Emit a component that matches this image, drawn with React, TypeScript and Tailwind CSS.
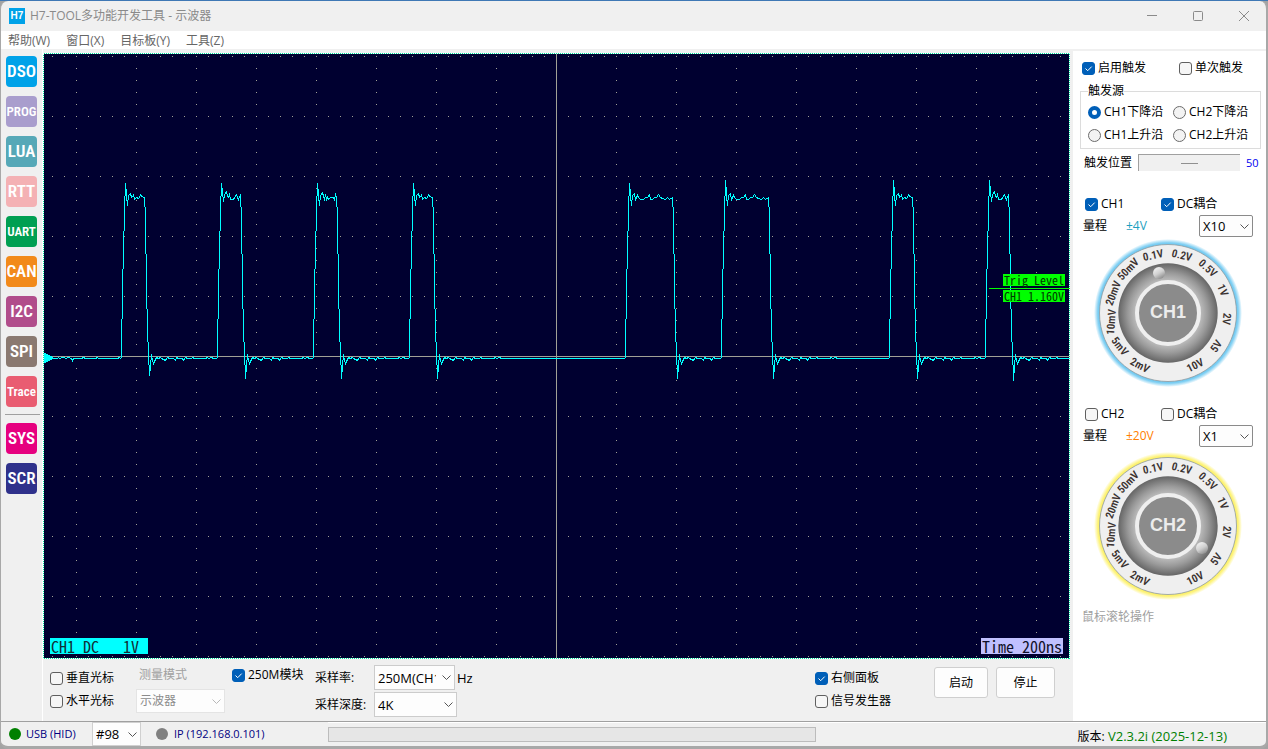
import React, { useState } from "react";

type Point = [number, number];

const TOOLS: { label: string; color: string; size: string }[] = [
  { label: "DSO", color: "bg-[#00a2e8]", size: "text-[17px]" },
  { label: "PROG", color: "bg-[#a99dcd]", size: "text-[13px]" },
  { label: "LUA", color: "bg-[#56a8b7]", size: "text-[17px]" },
  { label: "RTT", color: "bg-[#f4b1b4]", size: "text-[17px]" },
  { label: "UART", color: "bg-[#009f52]", size: "text-[13px]" },
  { label: "CAN", color: "bg-[#f28a1a]", size: "text-[17px]" },
  { label: "I2C", color: "bg-[#b14d8b]", size: "text-[17px]" },
  { label: "SPI", color: "bg-[#8a7970]", size: "text-[17px]" },
  { label: "Trace", color: "bg-[#e95c71]", size: "text-[13px]" },
];

const SYSTEM_TOOLS: { label: string; color: string; size: string }[] = [
  { label: "SYS", color: "bg-[#e6007f]", size: "text-[17px]" },
  { label: "SCR", color: "bg-[#2f318b]", size: "text-[17px]" },
];

const MENUS = ["帮助(W)", "窗口(X)", "目标板(Y)", "工具(Z)"];

/* ---------- waveform data ---------- */

const SHORT_TOPS: Point[][] = [
  [[1.5, 200], [2, 205], [3, 195], [5, 193], [6, 197], [7.5, 196], [8, 194], [9, 199], [11, 197], [13, 198], [14, 197], [15, 194], [16.5, 196], [19, 197]],
  [[1.5, 196], [2, 201], [3, 194], [5, 191], [6, 196], [7, 197], [8, 194], [9, 199], [12, 199], [13, 197], [15, 194], [16, 197], [17, 199], [19, 194]],
  [[1.5, 200], [2, 205], [3, 195], [5, 192], [6, 196], [7, 199], [8, 194], [9, 199], [10, 197], [11, 199], [13, 197], [16, 197], [17, 199], [18, 194], [19, 197]],
];

const LONG_TOP: Point[] = [
  [1.5, 200], [2, 205], [3, 195], [5, 193], [6, 199], [8, 195], [9, 197], [11, 199], [14, 199], [16, 197], [18, 197],
  [20, 194], [21, 199], [23, 199], [25, 197], [27, 197], [29, 194], [31, 197], [33, 198], [36, 199], [38, 197], [40, 199], [43, 197],
];

const NOISE: Point[] = [
  [31, 357], [33, 358], [35, 357], [36, 358], [40, 360], [41, 358], [42, 357], [44, 358], [48, 358], [50, 360], [51, 357], [53, 358],
  [57, 358], [58, 360], [60, 357], [62, 358], [66, 358], [67, 357], [69, 358], [80, 358], [82, 357], [83, 358], [86, 357], [88, 358],
];

const PULSES: { x: number; peak: number; wide?: boolean; low: number }[] = [
  { x: 125, peak: 183, low: 375 },
  { x: 221, peak: 183, low: 378 },
  { x: 317, peak: 183, low: 378 },
  { x: 413, peak: 183, low: 378 },
  { x: 629, peak: 183, low: 378, wide: true },
  { x: 725, peak: 180, low: 378, wide: true },
  { x: 893, peak: 180, low: 378 },
  { x: 989, peak: 180, low: 380 },
];

function buildTrace(): string {
  const pts: Point[] = [
    [53, 358], [57, 358], [58, 357], [59, 358], [62, 357], [64, 357], [65, 358], [68, 357], [71, 358], [72, 360], [73, 358],
    [81, 358], [83, 357], [85, 358], [95, 358], [97, 357], [98, 358], [117, 358], [119, 357], [120, 358],
  ];
  PULSES.forEach((p, i) => {
    const w = p.wide ? 24 : 0;
    const add = (dx: number, y: number) => pts.push([p.x + dx, y]);
    add(-5, 358);
    add(-3.6, 357);
    add(-3.5, 319);
    add(-2.5, 269);
    add(-1.5, 231);
    add(-0.6, 199);
    add(0, p.peak);
    (p.wide ? LONG_TOP : SHORT_TOPS[i % SHORT_TOPS.length]).forEach(([dx, y]) => add(dx, y));
    add(w + 19.4, 198);
    add(w + 19.5, 206);
    add(w + 20.5, 253);
    add(w + 21.5, 308);
    add(w + 22.5, 341);
    add(w + 23.5, 364);
    add(w + 24, p.low);
    add(w + 25, 366);
    add(w + 26, 354);
    add(w + 27, 360);
    add(w + 28, 363);
    add(w + 29, 361);
    const next = PULSES[i + 1] ? PULSES[i + 1].x - 6 : 1068;
    NOISE.forEach(([dx, y]) => {
      if (p.x + w + dx < next) add(w + dx, y);
    });
  });
  pts.push([1069, 358]);
  return pts.map(([x, y]) => `${x + 0.5},${y + 0.5}`).join(" ");
}

const TRACE = buildTrace();

const range = (from: number, to: number, step: number) => {
  const out: number[] = [];
  for (let v = from; v <= to; v += step) out.push(v);
  return out;
};

const ROWS = range(56, 656, 60).filter((y) => y !== 356);
const COLUMNS = range(76, 1036, 60).filter((x) => x !== 556);

function Scope() {
  return (
    <div className="relative min-h-0 flex-1 bg-white font-['Noto_Sans_Mono_CJK_SC','Liberation_Mono',monospace]">
      <svg className="absolute inset-0 h-full w-full" viewBox="43 53 1027 606" preserveAspectRatio="none" shapeRendering="crispEdges">
        <rect x="43.5" y="53.5" width="1026" height="605" fill="#000030" stroke="#ffffff" />
        <rect x="43.5" y="53.5" width="1026" height="605" fill="none" stroke="#00e6a0" strokeDasharray="1 1" />
        <g stroke="#a0a096" strokeWidth="1">
          {ROWS.map((y) => (
            <line key={y} x1="52" x2="1069" y1={y + 0.5} y2={y + 0.5} strokeDasharray="1 11" />
          ))}
          {COLUMNS.map((x) => (
            <line key={x} x1={x + 0.5} x2={x + 0.5} y1="56" y2="658" strokeDasharray="1 11" />
          ))}
          <line x1="556.5" x2="556.5" y1="54" y2="658" />
          <line x1="44" x2="1069" y1="356.5" y2="356.5" />
        </g>
        <polyline points={TRACE} fill="none" stroke="#00ffff" strokeWidth="1" />
        <path d="M44 352.5 L53.5 357.5 L53.5 358.5 L44 363.5 Z" fill="#00ffff" />
        <line x1="989" x2="1070" y1="288.5" y2="288.5" stroke="#00ff00" />
      </svg>
      <div className="absolute right-[5px] top-[221px] flex flex-col gap-1 text-[12px] leading-3 text-[#003800]">
        <span className="bg-[#00ff00] px-px">Trig Level</span>
        <span className="bg-[#00ff00] px-px">CH1 1.160V</span>
      </div>
      <div className="absolute bottom-[5px] left-[7px] w-[98px] whitespace-pre bg-[#00ffff] px-px text-[16px] leading-4 text-[#103038]">
        CH1 DC   1V
      </div>
      <div className="absolute bottom-[5px] right-[7px] w-[82px] whitespace-pre bg-[#c0c0ff] px-px text-[16px] leading-4 text-[#101028]">
        Time 200ns
      </div>
    </div>
  );
}

/* ---------- form controls ---------- */

function Check({ label, checked = false }: { label: string; checked?: boolean }) {
  const [on, setOn] = useState(checked);
  return (
    <label className="flex items-center gap-[3px] whitespace-nowrap">
      <span className="relative flex">
        <input
          type="checkbox"
          checked={on}
          onChange={() => setOn(!on)}
          className="size-[13px] appearance-none rounded-[3px] border border-[#5f5f5f] bg-[#f6f6f6] checked:border-[#005fb8] checked:bg-[#005fb8]"
        />
        {on && (
          <svg className="pointer-events-none absolute inset-0" width="13" height="13" viewBox="0 0 13 13" fill="none" stroke="#fff">
            <path d="M3.5 6.5 L5.7 8.7 L9.7 4.6" />
          </svg>
        )}
      </span>
      {label}
    </label>
  );
}

function Radio({ label, checked = false }: { label: string; checked?: boolean }) {
  return (
    <label className="flex items-center gap-[3px] whitespace-nowrap">
      <input
        type="radio"
        name="trigger-source"
        defaultChecked={checked}
        className="size-[13px] appearance-none rounded-full border border-[#6b6b6b] bg-[#f3f3f3] checked:border-4 checked:border-[#005fb8] checked:bg-white"
      />
      {label}
    </label>
  );
}

function Select({
  options,
  label,
  id,
  className,
  frame,
  disabled = false,
}: {
  options: string[];
  label?: string;
  id?: string;
  className: string;
  frame: string;
  disabled?: boolean;
}) {
  return (
    <span className={`relative block ${className}`}>
      <select
        id={id}
        aria-label={label}
        disabled={disabled}
        className={`block h-full w-full appearance-none border bg-[#fdfdfd] pl-[3px] pr-[18px] ${frame}`}
      >
        {options.map((o) => (
          <option key={o}>{o}</option>
        ))}
      </select>
      <svg
        className={`pointer-events-none absolute inset-y-0 right-1 my-auto ${disabled ? "text-[#b8b8b8]" : "text-[#555]"}`}
        width="9"
        height="5"
        viewBox="0 0 9 5"
        fill="none"
        stroke="currentColor"
      >
        <path d="M0.5 0.5 L4.5 4.5 L8.5 0.5" />
      </svg>
    </span>
  );
}

/* ---------- range knob ---------- */

const KNOB_MARKS: { t: string; x: number; y: number; r: number }[] = [
  { t: "2mV", x: -28, y: 52, r: 28 },
  { t: "5mV", x: -48, y: 33, r: 52 },
  { t: "10mV", x: -57, y: 9, r: -86 },
  { t: "20mV", x: -55, y: -20, r: -69 },
  { t: "50mV", x: -40, y: -44, r: -46 },
  { t: "0.1V", x: -15, y: -58, r: -12 },
  { t: "0.2V", x: 14, y: -58, r: 14 },
  { t: "0.5V", x: 40, y: -45, r: 42 },
  { t: "1V", x: 55, y: -23, r: 68 },
  { t: "2V", x: 59, y: 6, r: 95 },
  { t: "5V", x: 48, y: 33, r: -55 },
  { t: "10V", x: 27, y: 52, r: -27 },
];

function Knob({ name, glow, dot }: { name: string; glow: string; dot: Point }) {
  return (
    <svg width="148" height="148" viewBox="-74 -74 148 148" role="img" aria-label={name}>
      <defs>
        <radialGradient id={`${name}-glow`} gradientUnits="userSpaceOnUse" cx="0" cy="0" r="74">
          <stop offset="0.92" stopColor={glow} />
          <stop offset="0.95" stopColor={glow} stopOpacity="0.8" />
          <stop offset="1" stopColor={glow} stopOpacity="0" />
        </radialGradient>
        <radialGradient id={`${name}-body`} gradientUnits="userSpaceOnUse" cx="0" cy="0" r="50">
          <stop offset="0.62" stopColor="#c2c2c2" />
          <stop offset="0.8" stopColor="#9a9a9a" />
          <stop offset="1" stopColor="#646464" />
        </radialGradient>
        <linearGradient id={`${name}-dot`} x1="0.2" y1="0" x2="0.8" y2="1">
          <stop offset="0" stopColor="#f4f4f4" />
          <stop offset="0.5" stopColor="#d0d0d0" />
          <stop offset="1" stopColor="#858585" />
        </linearGradient>
      </defs>
      <circle r="74" fill={`url(#${name}-glow)`} />
      <circle r="68.5" fill="#efefef" stroke="#8f9aa0" strokeWidth="0.8" />
      <circle r="49.7" fill={`url(#${name}-body)`} />
      <circle r="31" fill="#8b8b8b" stroke="#efefef" strokeWidth="4" />
      <circle cx={dot[0]} cy={dot[1]} r="6" fill={`url(#${name}-dot)`} />
      <g className="font-['Liberation_Sans_Narrow','Roboto_Condensed','Liberation_Sans',sans-serif] text-[11px] font-semibold" fill="#3a3230" textAnchor="middle">
        {KNOB_MARKS.map((m) => (
          <text key={m.t} transform={`translate(${m.x} ${m.y}) rotate(${m.r})`} y="4">
            {m.t}
          </text>
        ))}
      </g>
      <text y="5" textAnchor="middle" fill="#ececec" className="font-['Liberation_Sans',sans-serif] text-[18px] font-bold">
        {name}
      </text>
    </svg>
  );
}

function Channel({
  name,
  enabled,
  span,
  spanColor,
  probes,
  knobGap,
  glow,
  dot,
}: {
  name: string;
  enabled: boolean;
  span: string;
  spanColor: string;
  probes: string[];
  knobGap: string;
  glow: string;
  dot: Point;
}) {
  return (
    <section>
      <div className="flex h-4 items-center pl-3">
        <div className="w-[76px]">
          <Check label={name} checked={enabled} />
        </div>
        <Check label="DC耦合" checked={enabled} />
      </div>
      <div className="mt-[3px] flex h-[22px] items-center pl-[10px] pr-[13px]">
        <span className="w-[43px]">量程</span>
        <span className={spanColor}>{span}</span>
        <Select
          label={`${name} 探头`}
          options={probes}
          className="ml-auto h-[22px] w-[54px]"
          frame="border-[#8a8a8a] text-[13px] rounded-[2px]"
        />
      </div>
      <div className={`pl-[21px] ${knobGap}`}>
        <Knob name={name} glow={glow} dot={dot} />
      </div>
    </section>
  );
}

function ToolButton({ label, color, size }: { label: string; color: string; size: string }) {
  return (
    <button
      className={`flex size-[31px] items-center justify-center rounded-[4px] font-['Liberation_Sans_Narrow','Roboto_Condensed','Liberation_Sans',sans-serif] font-semibold leading-none text-white ${color} ${size}`}
    >
      {label}
    </button>
  );
}

export default function App() {
  return (
    <div className="h-screen border-t border-[#3f78b5] bg-[#a3a3a3] font-['Open_Sans','Noto_Sans_CJK_SC',sans-serif] text-[12px] leading-4 text-black">
      <div className="flex h-full flex-col overflow-hidden rounded-[8px] border-b-3 border-l border-r-2 border-[#a8a8a8] bg-[#f0f0f0]">
        <header className="flex h-[30px] shrink-0 items-center pl-2 text-[#8a8a8a]">
          <span className="flex size-4 items-center justify-center bg-[#00a2e8] font-['Liberation_Sans',sans-serif] text-[10px] font-bold leading-none text-white">
            H7
          </span>
          <h1 className="ml-[5px]">H7-TOOL多功能开发工具 - 示波器</h1>
          <div className="ml-auto flex items-center gap-9 pr-[17px]">
            <button aria-label="最小化">
              <svg width="10" height="10" viewBox="0 0 10 10" stroke="#8a8a8a">
                <path d="M0 4.5 H10" />
              </svg>
            </button>
            <button aria-label="最大化">
              <svg width="10" height="10" viewBox="0 0 10 10" fill="none" stroke="#8a8a8a">
                <rect x="0.5" y="0.5" width="9" height="9" rx="1" />
              </svg>
            </button>
            <button aria-label="关闭">
              <svg width="10" height="10" viewBox="0 0 10 10" stroke="#8a8a8a">
                <path d="M0 0 L10 10 M10 0 L0 10" />
              </svg>
            </button>
          </div>
        </header>

        <nav className="flex h-[18px] shrink-0 items-end gap-4 bg-white pl-[7px] text-[#666]">
          {MENUS.map((m) => (
            <button key={m}>{m}</button>
          ))}
        </nav>

        <main className="flex min-h-0 flex-1">
          <aside className="w-[41px] shrink-0 pt-[7px]">
            <div className="flex flex-col gap-[9px] pl-[5px]">
              {TOOLS.map((t) => (
                <ToolButton key={t.label} {...t} />
              ))}
            </div>
            <hr className="mb-2 ml-1 mr-[2px] mt-[7px] border-t border-[#a0a0a0]" />
            <div className="flex flex-col gap-[9px] pl-[5px]">
              {SYSTEM_TOOLS.map((t) => (
                <ToolButton key={t.label} {...t} />
              ))}
            </div>
          </aside>

          <div className="flex min-w-0 flex-1 flex-col border-l border-white pr-[3px] pt-1">
            <Scope />
            <div className="flex h-[62px] shrink-0 pl-[7px] pr-[15px]">
              <div className="flex w-[86px] flex-col gap-[7px] pt-[11px]">
                <Check label="垂直光标" />
                <Check label="水平光标" />
              </div>
              <div className="flex flex-col gap-[6px] pt-2">
                <label htmlFor="mode" className="pl-[3px] text-[#a0a0a0]">
                  测量模式
                </label>
                <Select id="mode" options={["示波器"]} disabled className="h-6 w-[89px]" frame="border-[#e4e4e4] text-[#8c8c8c] text-[12px]" />
              </div>
              <div className="ml-[7px] w-[83px] pt-2">
                <Check label="250M模块" checked />
              </div>
              <div className="flex flex-col gap-[2px] pt-[6px]">
                <div className="flex h-[25px] items-center">
                  <label htmlFor="rate" className="w-[59px]">
                    采样率:
                  </label>
                  <Select id="rate" options={["250M(CH1)"]} className="h-[25px] w-[81px]" frame="border-[#cccccc] text-[13px]" />
                  <span className="ml-[2px] text-[13px]">Hz</span>
                </div>
                <div className="flex h-[25px] items-center">
                  <label htmlFor="depth" className="w-[59px]">
                    采样深度:
                  </label>
                  <Select id="depth" options={["4K"]} className="h-[25px] w-[83px]" frame="border-[#cccccc] text-[13px]" />
                </div>
              </div>
              <div className="ml-auto flex w-[119px] flex-col gap-[7px] pt-[11px]">
                <Check label="右侧面板" checked />
                <Check label="信号发生器" />
              </div>
              <div className="flex gap-2 pt-2">
                <button className="h-[31px] w-[54px] rounded-[3px] border border-[#cfcfcf] bg-[#fdfdfd]">启动</button>
                <button className="h-[31px] w-[59px] rounded-[3px] border border-[#cfcfcf] bg-[#fdfdfd]">停止</button>
              </div>
            </div>
          </div>

          <aside className="mt-[2px] w-[193px] shrink-0 bg-white pt-[9px]">
            <div className="flex h-4 items-center pl-[9px]">
              <div className="w-[97px]">
                <Check label="启用触发" checked />
              </div>
              <Check label="单次触发" />
            </div>

            <fieldset className="ml-[7px] mr-[5px] mt-[7px] border border-[#dcdcdc] pb-[5px] pl-[7px] pt-[5px]">
              <legend>触发源</legend>
              <div className="grid grid-cols-[85px_auto] gap-y-[7px]">
                <Radio label="CH1下降沿" checked />
                <Radio label="CH2下降沿" />
                <Radio label="CH1上升沿" />
                <Radio label="CH2上升沿" />
              </div>
            </fieldset>

            <div className="mt-[5px] flex h-[17px] items-center pl-[11px]">
              <label htmlFor="trigger-position" className="w-[54px]">
                触发位置
              </label>
              <input
                id="trigger-position"
                type="range"
                min={0}
                max={100}
                defaultValue={50}
                className="h-[17px] w-[102px] appearance-none border-l border-t border-[#a0a0a0] bg-[#f0f0f0] [&::-webkit-slider-thumb]:h-px [&::-webkit-slider-thumb]:w-[17px] [&::-webkit-slider-thumb]:appearance-none [&::-webkit-slider-thumb]:bg-[#909090]"
              />
              <output className="ml-[6px] text-[11px] text-[#0000f0]">50</output>
            </div>

            <div className="mt-[25px]">
              <Channel
                name="CH1"
                enabled
                span="±4V"
                spanColor="text-[#1e9fc0]"
                probes={["X10", "X1"]}
                knobGap="mt-[2px]"
                glow="#62c4f0"
                dot={[-9, -40]}
              />
            </div>
            <div className="mt-[19px]">
              <Channel
                name="CH2"
                enabled={false}
                span="±20V"
                spanColor="text-[#ff8000]"
                probes={["X1", "X10"]}
                knobGap="mt-[5px]"
                glow="#fdf05a"
                dot={[34, 22]}
              />
            </div>
            <p className="mt-[9px] pl-[9px] text-[#a0a0a0]">鼠标滚轮操作</p>
          </aside>
        </main>

        <footer className="flex h-[25px] shrink-0 items-center border-t border-[#a0a0a0] text-[11px] text-[#000080]">
          <span className="ml-2 size-3 rounded-full bg-[#008000]" />
          <span className="ml-[5px] w-[66px]">USB (HID)</span>
          <Select label="设备编号" options={["#98"]} className="h-6 w-[49px]" frame="border-[#d0d0d0] text-[13px] text-black" />
          <span className="ml-[15px] size-3 rounded-full bg-[#808080]" />
          <span className="ml-[6px] w-[154px]">IP (192.168.0.101)</span>
          <div className="flex h-full flex-1 items-center border-t border-white">
            <div role="progressbar" aria-label="进度" aria-valuenow={0} className="h-[15px] w-[488px] border border-[#bcbcbc] bg-[#e6e6e6]" />
            <p className="ml-auto pr-[39px] pt-1 text-[13px] text-[#008000]">
              <span className="text-[12px] text-black">版本:</span> V2.3.2i (2025-12-13)
            </p>
          </div>
        </footer>
      </div>
    </div>
  );
}
